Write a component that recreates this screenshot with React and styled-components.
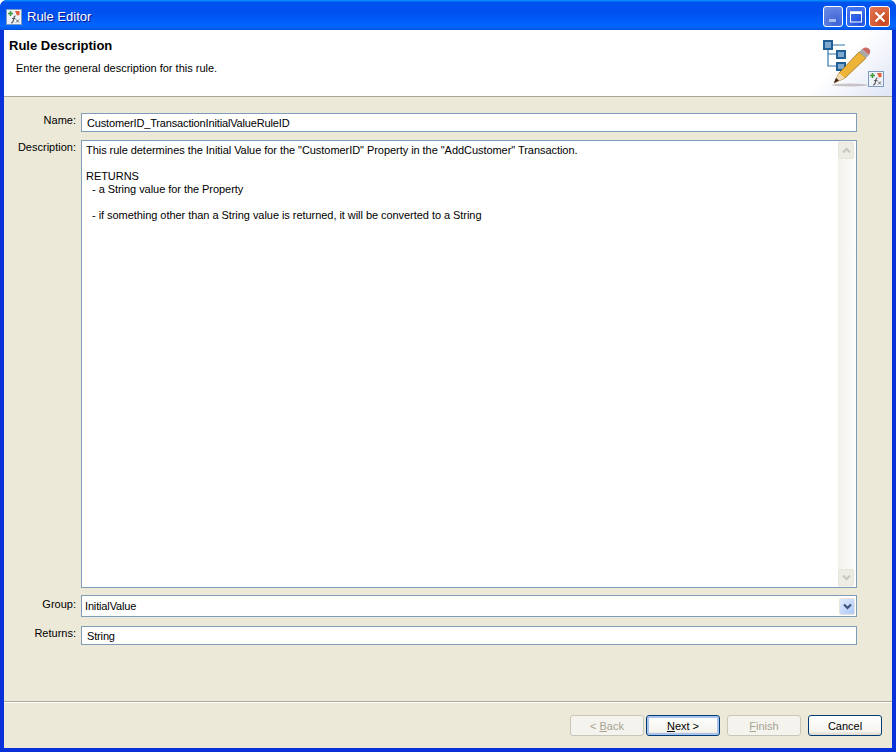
import React from 'react';
import styled, { createGlobalStyle } from 'styled-components';

const Global = createGlobalStyle`
  html, body { margin: 0; padding: 0; background: #fff; }
  * { box-sizing: border-box; }
`;

const Win = styled.div`
  width: 896px;
  height: 752px;
  display: flex;
  flex-direction: column;
  font-family: 'Liberation Sans', Arial, sans-serif;
  font-size: 11px;
  color: #000;
  background: #0831d9;
  border-radius: 7px 7px 0 0;
  overflow: hidden;
`;

const TitleBar = styled.div`
  height: 30px;
  flex: none;
  display: flex;
  align-items: center;
  padding: 3px 6px 0 6px;
  background: linear-gradient(180deg, #0997ff 0%, #0053ee 8%, #0050ee 40%, #0066ff 88%, #0053dd 100%);
`;

const TitleText = styled.span`
  margin-left: 5px;
  color: #fff;
  font-size: 13px;
  line-height: 16px;
  text-shadow: 1px 1px 1px #0f1089;
  flex: 1;
`;

const CapButton = styled.div`
  width: ${p => (p.$close ? 21 : 20)}px;
  height: 21px;
  margin-left: ${p => (p.$first ? 0 : 3)}px;
  border: 1px solid #fff;
  border-radius: 3px;
  display: flex;
  align-items: center;
  justify-content: center;
  background: ${p => (p.$close
    ? 'radial-gradient(circle at 70% 80%, #c9451f, #e2795a)'
    : p.$dim
      ? 'radial-gradient(circle at 70% 80%, #3d62d6, #6f8fe6)'
      : 'radial-gradient(circle at 70% 80%, #1f50e0, #4d7df0)')};
`;

const Body = styled.div`
  flex: 1;
  min-height: 0;
  margin: 0 4px 4px 4px;
  background: #ece9d8;
  display: flex;
  flex-direction: column;
`;

const Banner = styled.div`
  height: 67px;
  flex: none;
  display: flex;
  justify-content: space-between;
  background: linear-gradient(135deg, #fff 91%, #dfe5f5 100%);
  border-bottom: 1px solid #aca899;
`;

const BannerText = styled.div`
  padding: 8px 0 0 5px;
`;

const BannerTitle = styled.div`
  font-size: 13px;
  font-weight: 700;
  line-height: 16px;
`;

const BannerSub = styled.div`
  margin: 7px 0 0 7px;
  line-height: 14px;
`;

const BannerIcon = styled.svg`
  width: 72px;
  height: 60px;
  margin: 4px 4px 0 0;
`;

const Form = styled.div`
  flex: 1;
  min-height: 0;
  display: grid;
  grid-template-columns: 72px 776px;
  grid-template-rows: 19px 448px 22px 19px;
  column-gap: 5px;
  row-gap: 8px;
  padding-top: 16px;
  align-content: start;
`;

const Label = styled.div`
  text-align: right;
  line-height: 14px;
  padding-top: ${p => p.$top || 0}px;
`;

const Field = styled.div`
  background: #fff;
  border: 1px solid #7f9db9;
  padding: 0 5px;
  line-height: 18px;
  letter-spacing: -0.15px;
  white-space: nowrap;
`;

const ComboField = styled(Field)`
  display: flex;
  align-items: center;
  justify-content: space-between;
  padding: 0 1px 0 3px;
  margin-top: -1px;
  height: 22px;
`;

const Memo = styled.div`
  background: #fff;
  border: 1px solid #7f9db9;
  display: flex;
  min-height: 0;
`;

const MemoText = styled.div`
  flex: 1;
  padding: 3px 4px;
  line-height: 13px;
  letter-spacing: -0.05px;
  white-space: pre;
`;

const ScrollTrack = styled.div`
  width: 17px;
  margin-right: 1px;
  padding: 1px 0;
  display: flex;
  flex-direction: column;
  justify-content: space-between;
  background: linear-gradient(90deg, #f3f1ec, #fdfdfa);
`;

const ScrollBtn = styled.div`
  width: 16px;
  height: 17px;
  border: 1px solid #e8e6d8;
  border-radius: 2px;
  background: ${p => (p.$active ? 'linear-gradient(135deg, #e1eafe, #aec8f7)' : '#eeede5')};
  display: flex;
  align-items: center;
  justify-content: center;
`;

const Footer = styled.div`
  height: 47px;
  flex: none;
  margin-top: auto;
  border-top: 1px solid #aca899;
  box-shadow: inset 0 1px 0 #fff;
  display: flex;
  justify-content: flex-end;
  align-items: flex-start;
  padding: 13px 10px 0 0;
`;

const Btn = styled.button`
  width: 74px;
  height: 21px;
  padding: 1px 0 0;
  margin-left: ${p => p.$gap || 0}px;
  font: inherit;
  line-height: 17px;
  border-radius: 3px;
  color: ${p => (p.disabled ? '#a5a390' : '#000')};
  border: 1px solid ${p => (p.disabled ? '#c9c7ba' : '#003c74')};
  background: ${p => (p.disabled ? '#f4f3ee' : 'linear-gradient(180deg, #fff 0%, #f5f4ee 80%, #dcd8ce 100%)')};
  box-shadow: ${p => (p.$focus ? 'inset 0 0 0 2px #a9c3ee' : 'none')};
  u { text-underline-offset: 1px; }
`;

const Chevron = ({ up, color }) => (
  <svg width="9" height="7" viewBox="0 0 9 7">
    <path
      d={up ? 'M1 5.5L4.5 2L8 5.5' : 'M1 1.5L4.5 5L8 1.5'}
      fill="none"
      stroke={color}
      strokeWidth="2"
    />
  </svg>
);

const FxIcon = ({ x = 0, y = 0 }) => (
  <g transform={`translate(${x} ${y})`}>
    <rect x="0.5" y="0.5" width="15" height="15" fill="#eef2fa" stroke="#7d9ac4" />
    <path d="M2 4.5h5M4.5 2v5" stroke="#3f9a3a" strokeWidth="1.6" />
    <path d="M9 2h4.500v4L11 6.500z" fill="#e2603a" />
    <path d="M9.500 7C8 7 8 8 7.600 10.500S7 14 5 14" fill="none" stroke="#555" strokeWidth="1.2" />
    <path d="M6 9.500h3.500M10 10.500l3 3M13 10.500l-3 3" stroke="#555" strokeWidth="0.9" />
  </g>
);

const RULE_TEXT = `This rule determines the Initial Value for the "CustomerID" Property in the "AddCustomer" Transaction.

RETURNS
  - a String value for the Property

  - if something other than a String value is returned, it will be converted to a String`;

export default function App() {
  return (
    <Win>
      <Global />
      <TitleBar>
        <svg width="16" height="16" viewBox="0 0 16 16"><FxIcon /></svg>
        <TitleText>Rule Editor</TitleText>
        <CapButton $dim $first>
          <svg width="12" height="12" viewBox="0 0 12 12"><rect x="2" y="8" width="7" height="3" fill="#a9bcf0" /></svg>
        </CapButton>
        <CapButton>
          <svg width="14" height="14" viewBox="0 0 14 14"><rect x="1.500" y="2" width="11" height="10" fill="none" stroke="#fff" /><rect x="1" y="1.500" width="12" height="2.500" fill="#fff" /></svg>
        </CapButton>
        <CapButton $close>
          <svg width="14" height="14" viewBox="0 0 14 14"><path d="M2.500 2.500l9 9M11.500 2.500l-9 9" stroke="#fff" strokeWidth="2.200" /></svg>
        </CapButton>
      </TitleBar>
      <Body>
        <Banner>
          <BannerText>
            <BannerTitle>Rule Description</BannerTitle>
            <BannerSub>Enter the general description for this rule.</BannerSub>
          </BannerText>
          <BannerIcon viewBox="0 0 72 60">
            <path d="M12 14V32h8M12 20h8M17 11h12" fill="none" stroke="#2f76ab" strokeWidth="1.200" />
            <rect x="8" y="7" width="8" height="8" fill="#7fa8cf" stroke="#1f5f96" strokeWidth="2" />
            <rect x="21" y="17" width="8" height="7" fill="#7fa8cf" stroke="#1f5f96" strokeWidth="2" />
            <rect x="21" y="29" width="8" height="7" fill="#7fa8cf" stroke="#1f5f96" strokeWidth="2" />
            <ellipse cx="34" cy="51" rx="18" ry="1.500" fill="#c9c2c6" />
            <path d="M18 49l5-10 20-21 7 6-21 20z" fill="#eeb437" stroke="#9a6f1c" strokeWidth="0.800" />
            <path d="M18 49l5-10 6 5z" fill="#efd9b0" />
            <path d="M18 49l2-5 3 2.500z" fill="#3a2020" />
            <path d="M43 18l3-3 7 6-3 3z" fill="#a9a9a9" />
            <path d="M46 15l2-1c2-1 5 0 6 2 .5 1.500 0 3-1 5z" fill="#c96a64" />
            <FxIcon x={52} y={37} />
          </BannerIcon>
        </Banner>
        <Form>
          <Label>Name:</Label>
          <Field>CustomerID_TransactionInitialValueRuleID</Field>
          <Label>Description:</Label>
          <Memo>
            <MemoText>{RULE_TEXT}</MemoText>
            <ScrollTrack>
              <ScrollBtn><Chevron up color="#c8c7bd" /></ScrollBtn>
              <ScrollBtn><Chevron color="#c8c7bd" /></ScrollBtn>
            </ScrollTrack>
          </Memo>
          <Label $top={1}>Group:</Label>
          <ComboField>
            InitialValue
            <ScrollBtn $active><Chevron color="#3c4f78" /></ScrollBtn>
          </ComboField>
          <Label>Returns:</Label>
          <Field>String</Field>
        </Form>
        <Footer>
          <Btn disabled>&lt; <u>B</u>ack</Btn>
          <Btn $gap={2} $focus><u>N</u>ext &gt;</Btn>
          <Btn disabled $gap={7}><u>F</u>inish</Btn>
          <Btn $gap={7}>Cancel</Btn>
        </Footer>
      </Body>
    </Win>
  );
}
